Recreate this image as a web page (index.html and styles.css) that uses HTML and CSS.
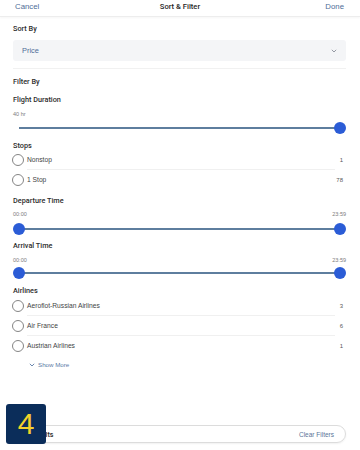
FILE: index.html
```html
<!DOCTYPE html>
<html lang="en">
<head>
<meta charset="utf-8">
<title>Sort &amp; Filter</title>
<link rel="stylesheet" href="styles.css">
</head>
<body>
<div class="page">
  <header class="topbar">
    <span class="link left">Cancel</span>
    <span class="title">Sort &amp; Filter</span>
    <span class="link right">Done</span>
  </header>

  <main class="content">
    <div class="h h-sort">Sort By</div>
    <div class="select">
      <span>Price</span>
      <svg class="chev" width="6" height="4" viewBox="0 0 6 4"><path d="M0.8 0.8 L3 3 L5.2 0.8" fill="none" stroke="#8a8f98" stroke-width="0.9"/></svg>
    </div>
    <div class="divider"></div>

    <div class="h h-filter">Filter By</div>

    <div class="h h-dur">Flight Duration</div>
    <div class="small s-dur">40 hr</div>
    <div class="slider sl-dur"><div class="track"><span class="thumb end"></span></div></div>

    <div class="h h-stops">Stops</div>
    <div class="opts o-stops">
      <div class="opt"><span class="radio"></span><span class="opt-label">Nonstop</span><span class="count">1</span></div>
      <div class="opt"><span class="radio"></span><span class="opt-label">1 Stop</span><span class="count">78</span></div>
    </div>

    <div class="h h-dep">Departure Time</div>
    <div class="small times t-dep"><span>00:00</span><span>23:59</span></div>
    <div class="slider sl-dep"><div class="track"><span class="thumb start"></span><span class="thumb end"></span></div></div>

    <div class="h h-arr">Arrival Time</div>
    <div class="small times t-arr"><span>00:00</span><span>23:59</span></div>
    <div class="slider sl-arr"><div class="track"><span class="thumb start"></span><span class="thumb end"></span></div></div>

    <div class="h h-air">Airlines</div>
    <div class="opts o-air">
      <div class="opt"><span class="radio"></span><span class="opt-label">Aeroflot-Russian Airlines</span><span class="count">3</span></div>
      <div class="opt"><span class="radio"></span><span class="opt-label">Air France</span><span class="count">6</span></div>
      <div class="opt"><span class="radio"></span><span class="opt-label">Austrian Airlines</span><span class="count">1</span></div>
    </div>
    <div class="more">
      <svg width="6" height="4" viewBox="0 0 6 4"><path d="M0.8 0.8 L3 3 L5.2 0.8" fill="none" stroke="#5b7aa6" stroke-width="0.9"/></svg>
      <span>Show More</span>
    </div>
  </main>

  <footer class="actions">
    <div class="pill">
      <span class="primary">Show Results</span>
      <span class="secondary">Clear Filters</span>
    </div>
  </footer>

  <div class="badge">4</div>
</div>
</body>
</html>
```

FILE: styles.css
```css
* { box-sizing: border-box; }
html, body { margin: 0; padding: 0; background: #fff; }
body {
  font-family: "Liberation Sans", Arial, sans-serif;
  color: #2b2b2b;
}
.page {
  position: relative;
  width: 360px;
  min-height: 450px;
  display: flex;
  flex-direction: column;
}

/* header */
.topbar {
  height: 17px;
  display: grid;
  grid-template-columns: 1fr auto 1fr;
  align-items: start;
  line-height: 14px;
  border-bottom: 1px solid #ededed;
  box-shadow: 0 1px 2px rgba(0,0,0,0.04);
}
.link { font-size: 7.8px; color: #4e6d97; }
.link.left { padding-left: 15px; }
.link.right { justify-self: end; padding-right: 16px; }
.title { font-family: Roboto, "Liberation Sans", sans-serif; font-size: 7.6px; font-weight: 500; color: #1e1e1e; }

/* content */
.content {
  flex: 1;
  padding: 0 14px 0 13px;
}
.h {
  font-family: Roboto, "Liberation Sans", sans-serif;
  font-size: 7.3px;
  font-weight: 500;
  color: #2d2d2d;
  line-height: 12px;
}
.h-sort { margin-top: 6px; }
.h-filter { margin-top: 7px; }
.h-dur { margin-top: 6px; }
.h-stops { margin-top: 8px; line-height: 8px; }
.h-dep { margin-top: 5px; }
.h-arr { margin-top: 5px; }
.h-air { margin-top: 8px; line-height: 8px; }

.select {
  margin-top: 5px;
  height: 21px;
  background: #f4f5f7;
  border-radius: 3px;
  display: flex;
  align-items: center;
  justify-content: space-between;
  padding: 0 9px 0 9px;
  font-size: 7.4px;
  color: #4e6d97;
}
.divider {
  margin-top: 7px;
  height: 1px;
  background: #f1f1f1;
}

.small {
  font-size: 5.5px;
  color: #7c7c7c;
  line-height: 8px;
}
.s-dur { margin-top: 4px; }
.times { display: flex; justify-content: space-between; }
.t-dep { margin-top: 3px; }
.t-arr { margin-top: 4px; }

.slider {
  height: 12px;
  display: flex;
  align-items: center;
  padding: 0 6px;
}
.sl-dur { margin-top: 4px; }
.sl-dep { margin-top: 5px; }
.sl-arr { margin-top: 3px; }
.track {
  position: relative;
  flex: 1;
  height: 2px;
  background: #5e7e9e;
}
.thumb {
  position: absolute;
  top: -5px;
  width: 12px;
  height: 12px;
  border-radius: 50%;
  background: #2b5cd6;
}
.thumb.start { left: -6px; }
.thumb.end { right: -6px; }

/* option rows */
.opts { margin-left: -1px; }
.o-air { margin-top: 1px; }
.opt {
  display: flex;
  align-items: center;
  height: 20px;
}
.radio {
  width: 12px;
  height: 12px;
  border-radius: 50%;
  border: 1px solid #858585;
  flex: none;
}
.opt-label {
  flex: 1;
  align-self: stretch;
  display: flex;
  align-items: center;
  margin-left: 3px;
  border-bottom: 1px solid #f0f0f0;
  font-size: 6.7px;
  color: #444;
}
.opt:last-child .opt-label { border-bottom-color: transparent; }
.count {
  width: 8px;
  margin-right: 3px;
  text-align: right;
  font-size: 6px;
  color: #5a5a5a;
}

.more {
  margin-top: 5px;
  line-height: 8px;
  display: flex;
  align-items: center;
  gap: 3px;
  padding-left: 16px;
  font-size: 6.2px;
  color: #5b7aa6;
}

/* footer */
.actions {
  padding: 0 14px 7px 6px;
}
.pill {
  height: 18px;
  border: 1px solid #dcdcdc;
  border-radius: 9px;
  box-shadow: 0 1px 2px rgba(0,0,0,0.06);
  display: flex;
  align-items: center;
  justify-content: space-between;
  padding: 0 11px 0 3px;
}
.primary { font-family: Roboto, "Liberation Sans", sans-serif; font-size: 7.2px; font-weight: 500; color: #2a2a2a; }
.secondary { font-size: 6.5px; color: #5a7598; }

.badge {
  position: absolute;
  left: 6px;
  top: 404px;
  width: 40px;
  height: 40px;
  border-radius: 3px;
  background: #0b2d5a;
  color: #f3d22b;
  font-size: 30px;
  line-height: 40px;
  text-align: center;
}
```
